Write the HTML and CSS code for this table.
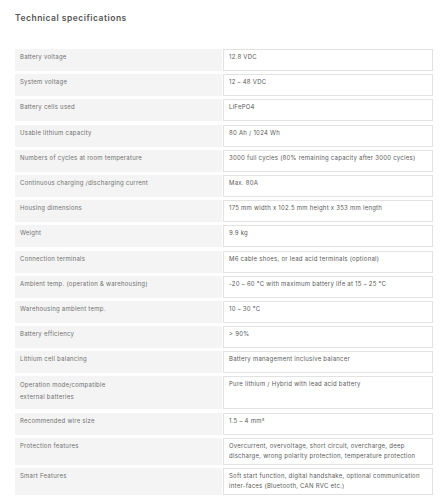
FILE: index.html
```html
<!DOCTYPE html>
<html>
<head>
<meta charset="utf-8">
<link rel="stylesheet" href="styles.css">
</head>
<body>
<section class="specs">
  <h2 class="title">Technical specifications</h2>
  <div class="grid">
    <div class="k">Battery voltage</div><div class="v">12.8 VDC</div>
    <div class="k">System voltage</div><div class="v">12 – 48 VDC</div>
    <div class="k">Battery cells used</div><div class="v">LiFePO4</div>
    <div class="k">Usable lithium capacity</div><div class="v">80 Ah / 1024 Wh</div>
    <div class="k">Numbers of cycles at room temperature</div><div class="v">3000 full cycles (80% remaining capacity after 3000 cycles)</div>
    <div class="k">Continuous charging /discharging current</div><div class="v">Max. 80A</div>
    <div class="k">Housing dimensions</div><div class="v">175 mm width x 102.5 mm height x 353 mm length</div>
    <div class="k">Weight</div><div class="v">9.9 kg</div>
    <div class="k">Connection terminals</div><div class="v">M6 cable shoes, or lead acid terminals (optional)</div>
    <div class="k">Ambient temp. (operation &amp; warehousing)</div><div class="v">-20 – 60 °C with maximum battery life at 15 – 25 °C</div>
    <div class="k">Warehousing ambient temp.</div><div class="v">10 – 30 °C</div>
    <div class="k">Battery efficiency</div><div class="v">&gt; 90%</div>
    <div class="k">Lithium cell balancing</div><div class="v">Battery management inclusive balancer</div>
    <div class="k tall">Operation mode/compatible<br>external batteries</div><div class="v">Pure lithium / Hybrid with lead acid battery</div>
    <div class="k">Recommended wire size</div><div class="v">1.5 – 4 mm²</div>
    <div class="k">Protection features</div><div class="v">Overcurrent, overvoltage, short circuit, overcharge, deep discharge, wrong polarity protection, temperature protection</div>
    <div class="k">Smart Features</div><div class="v">Soft start function, digital handshake, optional communication inter-faces (Bluetooth, CAN RVC etc.)</div>
  </div>
</section>
</body>
</html>
```
FILE: styles.css
```css
html, body {
  margin: 0;
  padding: 0;
  background: #fff;
}
.specs {
  padding: 13px 10px 0 15px;
  font-family: Inter, "Liberation Sans", sans-serif;
}
.title {
  margin: 0 0 26px 0;
  font-size: 8.5px;
  line-height: 10px;
  font-weight: 600;
  letter-spacing: 0.5px;
  color: #555;
}
.grid {
  display: grid;
  grid-template-columns: 207px 210px;
  column-gap: 1px;
  row-gap: 3.2px;
  grid-auto-rows: minmax(22px, auto);
}
.k, .v {
  font-size: 6px;
  line-height: 10px;
  letter-spacing: 0.25px;
  padding: 3px 5px 4px 5px;
  color: #707070;
}
.k {
  background: #f4f4f4;
}
.v {
  border: 1px solid #e2e2e2;
  padding: 2px 5px 3px 5px;
  color: #5a5a5a;
}
.k.tall {
  line-height: 12px;
  padding-bottom: 6px;
}
```
